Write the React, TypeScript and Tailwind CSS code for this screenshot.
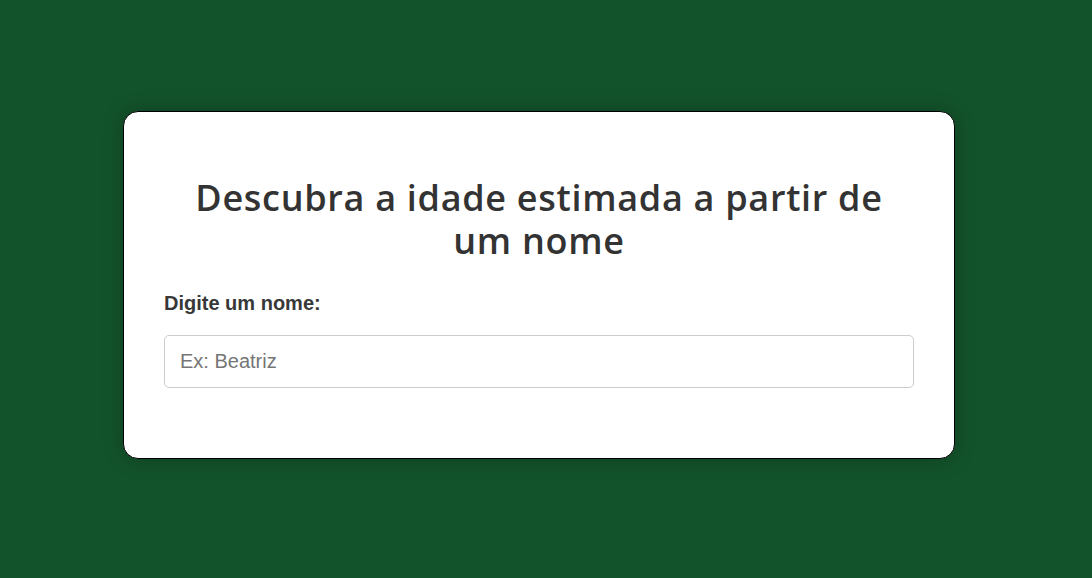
export default function App() {
  return (
    <div className="min-h-screen w-full bg-[#13532b] flex justify-center pt-[111px] pr-[14px]">
      <div className="w-[832px] h-[348px] bg-white border border-black rounded-[15px] shadow-[0_0_20px_rgba(0,0,0,0.25)] px-10 pt-[64px] flex flex-col">
        <h1 className="mx-auto max-w-[710px] text-center text-[36px] leading-[43px] tracking-[0.7px] font-semibold text-[#333] font-['Open_Sans',sans-serif]">
          Descubra a idade estimada a partir de um nome
        </h1>
        <label
          htmlFor="nome"
          className="mt-[29px] text-[20px] leading-[24px] font-bold text-[#383838] font-['Liberation_Sans',Arial,sans-serif]"
        >
          Digite um nome:
        </label>
        <input
          id="nome"
          type="text"
          placeholder="Ex: Beatriz"
          className="mt-[20px] h-[53px] w-full border border-[#ccc] rounded-[5px] px-[15px] text-[20px] text-[#333] placeholder:text-[#757575] outline-none font-['Liberation_Sans',Arial,sans-serif]"
        />
      </div>
    </div>
  );
}
